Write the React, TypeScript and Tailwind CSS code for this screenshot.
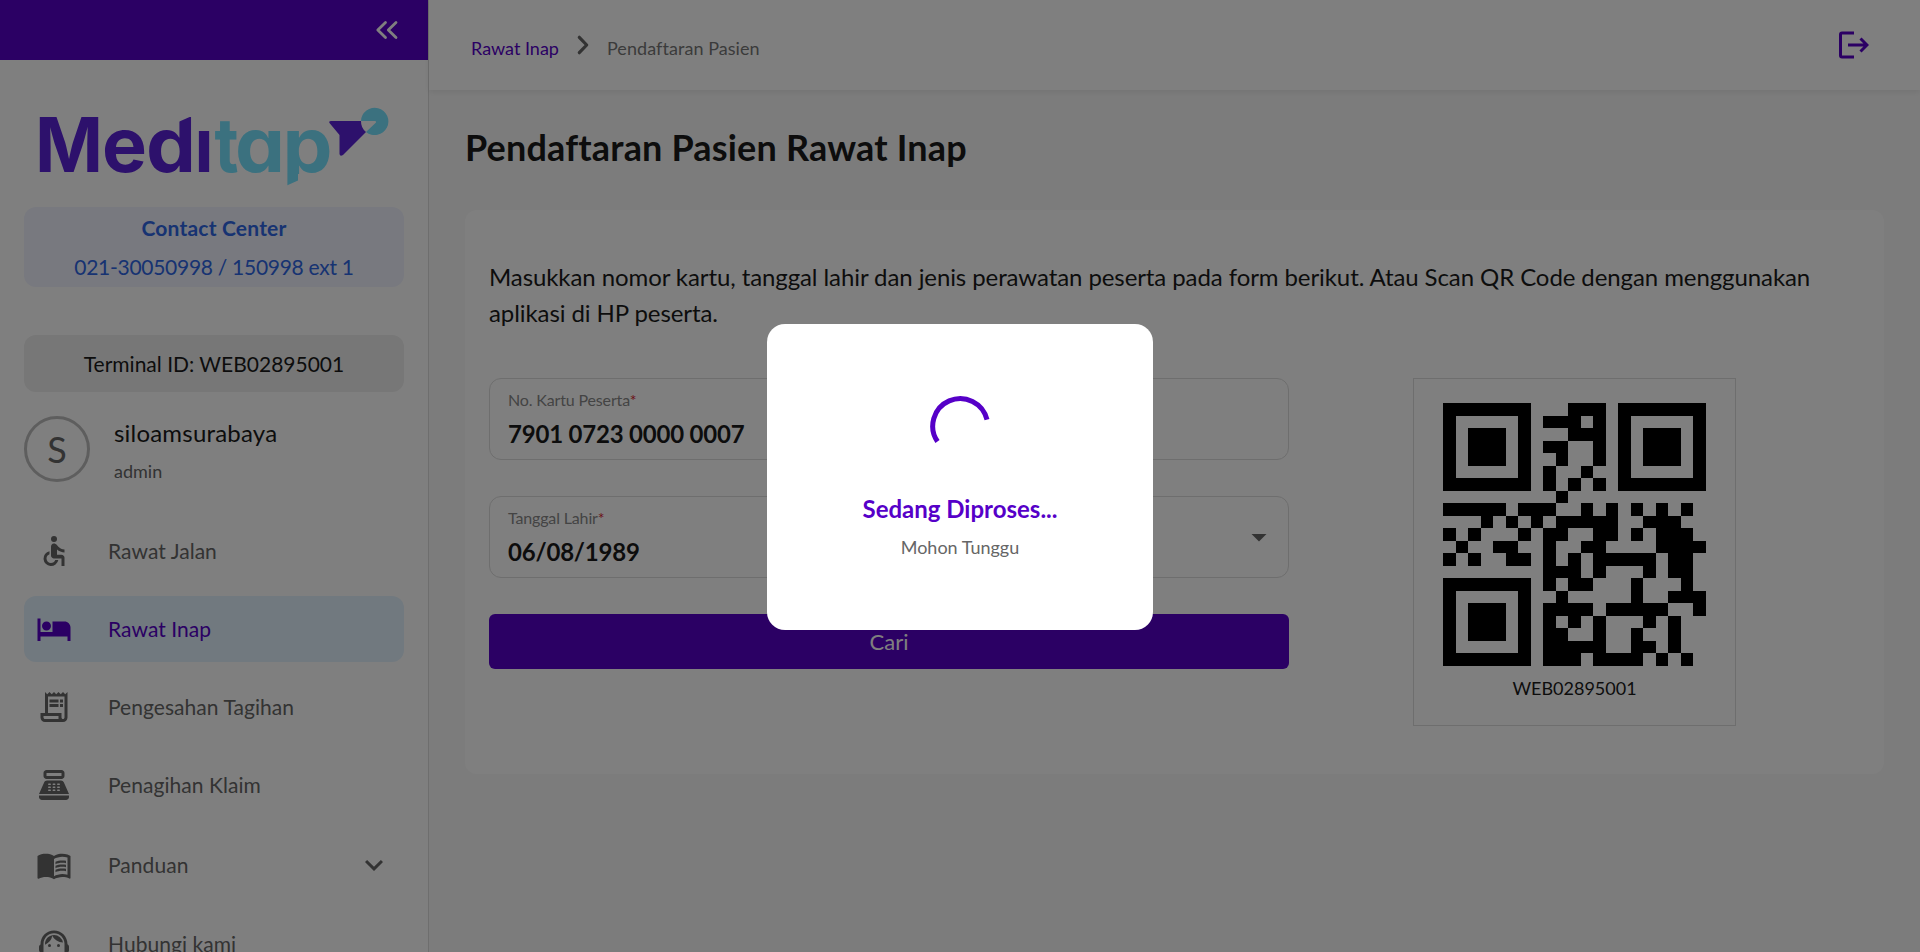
import type { ReactNode } from "react";
import {
  MdAccessible,
  MdArrowDropDown,
  MdExpandMore,
  MdHotel,
  MdMenuBook,
  MdOutlineReceiptLong,
  MdPointOfSale,
  MdSupportAgent,
} from "react-icons/md";

const QR_ROWS = [
  "#######...###.#######",
  "#.....#.###.#.#.....#",
  "#.###.#...###.#.###.#",
  "#.###.#.##..#.#.###.#",
  "#.###.#..#..#.#.###.#",
  "#.....#.#..#..#.....#",
  "#######.#.#.#.#######",
  ".........#...........",
  "#####.###..#.#.#.#.#.",
  "...#.#.#.#####..###..",
  "#.#...#.##..##.#.###.",
  ".#..##..#..##....####",
  "#.#..##.#.#.#####.##.",
  "........###.#...#.##.",
  "#######.#.##...#...#.",
  "#.....#..#.....#..###",
  "#.###.#.####.#####..#",
  "#.###.#.#.#.#...#.#..",
  "#.###.#.##..#..#..#..",
  "#.....#.#####..##.#..",
  "#######.###.####.#.#.",
];

function QrCode() {
  return (
    <svg viewBox="0 0 21 21" className="h-[263px] w-[263px]" shapeRendering="crispEdges">
      {QR_ROWS.flatMap((row, y) =>
        [...row].map((cell, x) =>
          cell === "#" ? <rect key={`${x}-${y}`} x={x} y={y} width="1" height="1" fill="#000" /> : null,
        ),
      )}
    </svg>
  );
}

function Logo() {
  return (
    <svg
      viewBox="0 0 350 80"
      className="ml-[15px] h-20 w-[350px] overflow-visible font-['Inter',sans-serif] font-bold [font-feature-settings:'cv11']"
      fontSize="75.5"
    >
      <defs>
        <clipPath id="ascender">
          <path d="M100 0H137V15L154 7.500V80H100Z" />
        </clipPath>
        <clipPath id="descender">
          <path d="M240 0H300V66H259V72.500L240 81Z" />
        </clipPath>
      </defs>
      <g fill="#5b23d8">
        <text x="-4" y="63.500" textLength="68" lengthAdjust="spacingAndGlyphs">M</text>
        <text x="63" y="63.500">e</text>
        <text x="107" y="63.500" textLength="50" lengthAdjust="spacingAndGlyphs" clipPath="url(#ascender)">d</text>
        <text x="155.500" y="63.500" textLength="19" lengthAdjust="spacingAndGlyphs">ı</text>
        <path d="M292 13H322A13.700 13.700 0 0 0 327 24L304 47Q301 49 300.500 46V27L290.500 15Q289.500 13 292 13Z" />
      </g>
      <g fill="#76e2ff">
        <text x="175.500" y="63.500" textLength="24" lengthAdjust="spacingAndGlyphs">t</text>
        <text x="196" y="63.500" textLength="50" lengthAdjust="spacingAndGlyphs">a</text>
        <text x="243.500" y="63.500" textLength="50" lengthAdjust="spacingAndGlyphs" clipPath="url(#descender)">p</text>
        <path d="M322 13A13.700 13.700 0 1 1 327 24L337 14.500Q337.500 13 336 13Z" />
      </g>
    </svg>
  );
}

function CollapseIcon() {
  return (
    <svg
      viewBox="0 0 36 36"
      className="size-9"
      fill="none"
      stroke="currentColor"
      strokeWidth="2.8"
      strokeLinecap="round"
      strokeLinejoin="round"
    >
      <path d="M17.500 10.500L9.800 18L17.500 25.500M28 10.500L20.300 18L28 25.500" />
    </svg>
  );
}

function CrumbIcon() {
  return (
    <svg
      viewBox="0 0 36 36"
      className="mx-1.5 size-9 text-[#666]"
      fill="none"
      stroke="currentColor"
      strokeWidth="3.2"
      strokeLinecap="round"
      strokeLinejoin="round"
    >
      <path d="M14.300 10.300L21.700 18L14.300 25.700" />
    </svg>
  );
}

function NavItem({
  icon,
  label,
  active = false,
  trailing,
}: {
  icon: ReactNode;
  label: string;
  active?: boolean;
  trailing?: ReactNode;
}) {
  return (
    <a
      className={`flex shrink-0 items-center rounded-xl pl-3 text-[21px] tracking-[0.05px] ${
        trailing ? "h-[69px]" : "h-[66px]"
      } ${active ? "bg-[#e3f2ff] text-[#5600c8]" : "text-[#666]"}`}
    >
      <span className="text-4xl">{icon}</span>
      <span className="ml-9 flex-1">{label}</span>
      {trailing}
    </a>
  );
}

function Sidebar() {
  return (
    <aside className="flex w-[429px] shrink-0 flex-col border-r border-[#dcdcdc] bg-white">
      <div className="flex h-[60px] shrink-0 items-center justify-end bg-[#5600c8] pr-6 text-white">
        <CollapseIcon />
      </div>
      <div className="flex flex-col px-6 pt-12">
        <Logo />
        <div className="mt-[19px] flex h-20 flex-col items-center rounded-xl bg-[#f0f2ff] pt-px text-[21px] leading-[39px] text-[#2f66e4]">
          <strong className="font-bold tracking-[0.2px]">Contact Center</strong>
          <span className="tracking-[-0.28px]">021-30050998 / 150998 ext 1</span>
        </div>
        <div className="mt-12 flex h-[57px] items-center justify-center rounded-xl bg-[#eee] text-[21px] text-[#1a1a1a]">
          Terminal ID: WEB02895001
        </div>
        <div className="mt-6 flex h-[66px]">
          <div className="flex size-[66px] items-center justify-center rounded-full border-[3px] border-[#bdbdbd] text-4xl text-[#666]">
            S
          </div>
          <div className="-mt-px ml-6 flex flex-col">
            <span className="text-2xl leading-9 tracking-[0.2px] text-[#1a1a1a]">siloamsurabaya</span>
            <span className="mt-0.5 text-lg leading-9 text-[#666]">admin</span>
          </div>
        </div>
      </div>
      <nav className="flex flex-col gap-3 px-6 pt-9">
        <NavItem icon={<MdAccessible />} label="Rawat Jalan" />
        <NavItem icon={<MdHotel />} label="Rawat Inap" active />
        <NavItem icon={<MdOutlineReceiptLong />} label="Pengesahan Tagihan" />
        <NavItem icon={<MdPointOfSale />} label="Penagihan Klaim" />
        <NavItem
          icon={<MdMenuBook />}
          label="Panduan"
          trailing={<MdExpandMore className="mr-3 size-9" />}
        />
        <NavItem icon={<MdSupportAgent />} label="Hubungi kami" />
      </nav>
    </aside>
  );
}

function Field({ label, value, trailing }: { label: string; value: string; trailing?: ReactNode }) {
  return (
    <div className="flex h-[82px] items-center justify-between rounded-xl border border-[#dcdcdc] pt-0.5 pr-[11px] pl-[18px]">
      <div className="flex flex-col">
        <span className="text-base leading-6 tracking-[-0.15px] text-[#888]">
          {label}
          <span className="text-[#d8232f]">*</span>
        </span>
        <span className="mt-1 text-2xl leading-9 font-bold tracking-[-0.2px] text-[#1a1a1a]">{value}</span>
      </div>
      {trailing}
    </div>
  );
}

function Header() {
  return (
    <header className="flex h-[90px] shrink-0 items-center justify-between bg-white pr-[51px] pl-[42px] shadow-[0_2px_6px_rgba(0,0,0,0.08)]">
      <div className="flex items-center text-lg">
        <span className="pt-1.5 text-[#5600c8]">Rawat Inap</span>
        <CrumbIcon />
        <span className="pt-1.5 tracking-[0.06px] text-[#777]">Pendaftaran Pasien</span>
      </div>
      <svg viewBox="0 0 30 28" className="h-7 w-[30px]" fill="none" stroke="#5600c8" strokeWidth="3">
        <path d="M15 2H3Q1.500 2 1.500 3.500V24.500Q1.500 26 3 26H15" />
        <path d="M9 14H28M21.500 7.500L28 14L21.500 20.500" />
      </svg>
    </header>
  );
}

function LoadingDialog() {
  return (
    <div className="fixed inset-0 flex items-center justify-center bg-black/50">
      <div className="mt-0.5 flex h-[306px] w-[386px] flex-col items-center rounded-[18px] bg-white pt-[71px]">
        <svg viewBox="0 0 60 60" className="size-[60px]" fill="none" stroke="#5600c8" strokeWidth="5">
          <path d="M57 24.700A27.500 27.500 0 1 0 7.500 46.500" />
        </svg>
        <strong className="mt-9 text-2xl leading-9 font-bold text-[#5600c8]">Sedang Diproses...</strong>
        <span className="mt-2 text-lg leading-6 text-[#666]">Mohon Tunggu</span>
      </div>
    </div>
  );
}

export default function App() {
  return (
    <div className="flex h-[952px] w-full overflow-hidden bg-[#f9f9f9] font-['Lato',sans-serif]">
      <Sidebar />
      <div className="flex min-w-0 flex-1 flex-col">
        <Header />
        <main className="flex flex-col px-9 pt-[31px]">
          <h1 className="text-4xl leading-[52px] font-bold tracking-[0.17px] text-[#1a1a1a]">
            Pendaftaran Pasien Rawat Inap
          </h1>
          <section className="mt-[37px] flex h-[564px] flex-col rounded-xl bg-white px-6 pt-[49px]">
            <p className="text-2xl leading-9 tracking-[-0.09px] text-[#1a1a1a]">
              Masukkan nomor kartu, tanggal lahir dan jenis perawatan peserta pada form berikut. Atau Scan QR Code
              dengan menggunakan aplikasi di HP peserta.
            </p>
            <div className="mt-[47px] flex">
              <form className="flex w-[800px] flex-col gap-9">
                <Field label="No. Kartu Peserta" value="7901 0723 0000 0007" />
                <Field
                  label="Tanggal Lahir"
                  value="06/08/1989"
                  trailing={<MdArrowDropDown className="mb-0.5 size-9 text-[#666]" />}
                />
                <button
                  type="button"
                  className="h-[55px] rounded-md bg-[#5600c8] text-[22px] text-white"
                >
                  Cari
                </button>
              </form>
              <div className="ml-[124px] flex h-[348px] w-[323px] flex-col items-center border border-[#dcdcdc] pt-6">
                <QrCode />
                <span className="mt-2 text-lg leading-7 text-[#1a1a1a]">WEB02895001</span>
              </div>
            </div>
          </section>
        </main>
      </div>
      <LoadingDialog />
    </div>
  );
}
